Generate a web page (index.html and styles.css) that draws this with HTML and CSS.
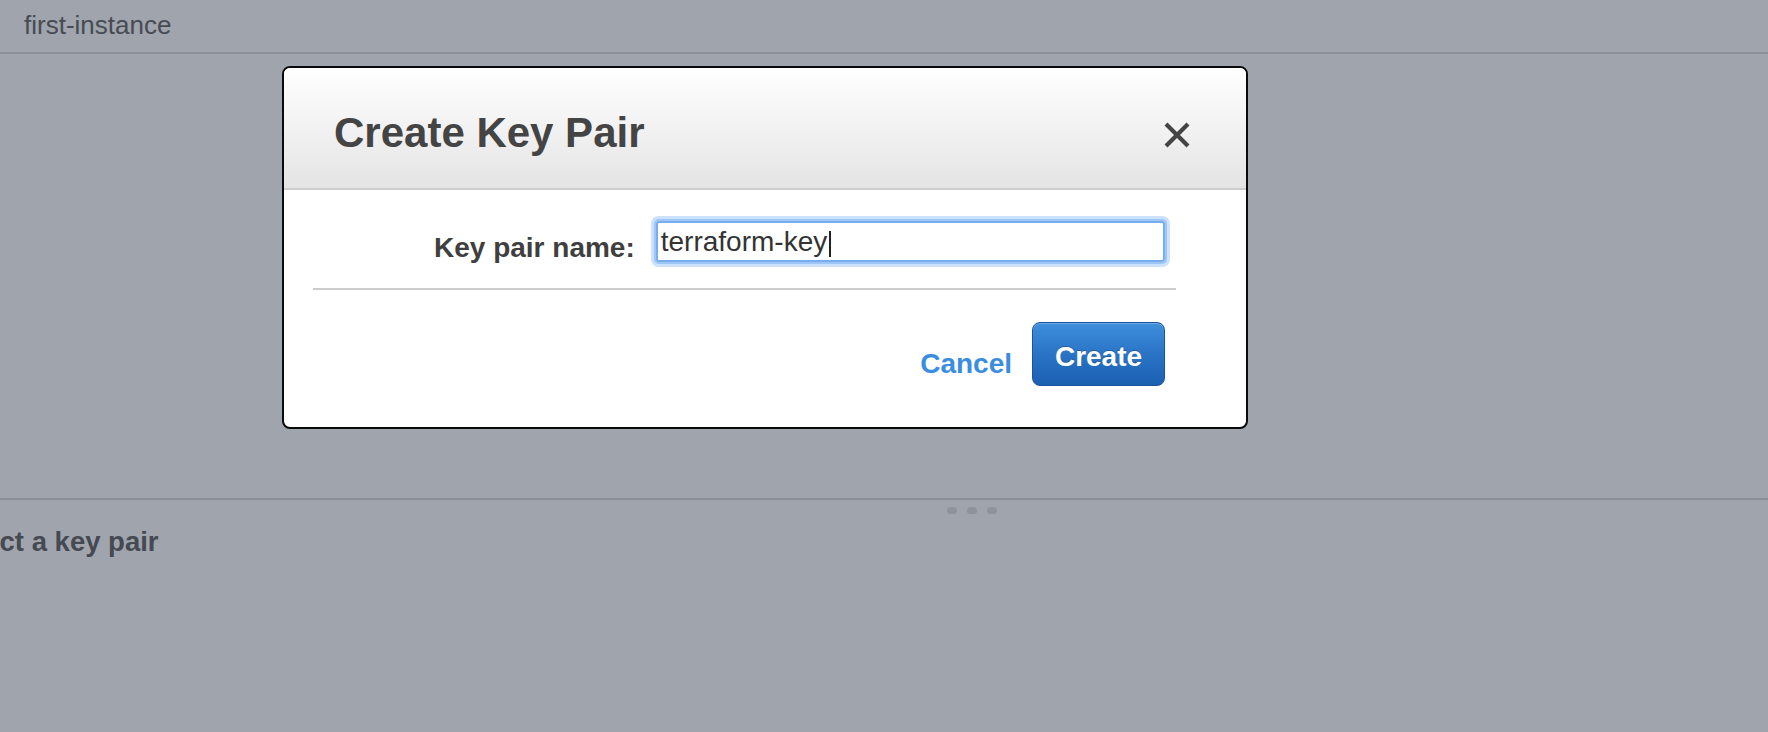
FILE: index.html
```html
<!DOCTYPE html>
<html>
<head>
<meta charset="utf-8">
<link rel="stylesheet" href="styles.css">
</head>
<body>
<div class="page">
  <div class="topbar">first-instance</div>
  <div class="upper"></div>
  <div class="handle"><span class="dot"></span><span class="dot"></span><span class="dot"></span></div>
  <div class="lower">
    <h2 class="section-title">Select a key pair</h2>
  </div>

  <div class="modal">
    <div class="modal-header">
      <h1 class="modal-title">Create Key Pair</h1>
      <svg class="close" width="28" height="26" viewBox="0 0 28 26">
        <path d="M3 2 L25 24 M25 2 L3 24" stroke="#444" stroke-width="4.2" stroke-linecap="butt" fill="none"/>
      </svg>
    </div>
    <div class="modal-body">
      <div class="field-row">
        <label class="field-label">Key pair name:</label>
        <div class="input">terraform-key<span class="caret"></span></div>
      </div>
      <div class="sep"></div>
      <div class="actions">
        <a class="cancel">Cancel</a>
        <button class="btn-primary">Create</button>
      </div>
    </div>
  </div>
</div>
</body>
</html>
```

FILE: styles.css
```css
* { box-sizing: border-box; }
html, body {
  margin: 0;
  padding: 0;
  background: #a0a4ac;
  font-family: "Liberation Sans", Arial, Helvetica, sans-serif;
  overflow: hidden;
}
.page {
  position: relative;
  width: 1768px;
  height: 732px;
}
.topbar {
  height: 54px;
  border-bottom: 2px solid #8c9098;
  padding-left: 24px;
  font-size: 26px;
  line-height: 30px;
  padding-top: 10px;
  color: #474b54;
}
.upper {
  height: 446px;
  border-bottom: 2px solid #8b8f97;
}
.handle {
  display: flex;
  gap: 10px;
  padding-left: 947px;
  margin-top: 7px;
}
.dot {
  width: 10px;
  height: 7px;
  background: #8e929a;
  border-radius: 4px 4px 3px 3px;
}
.lower {
  padding-top: 12px;
}
.section-title {
  margin: 0 0 0 -57px;
  font-size: 27.5px;
  line-height: 32px;
  font-weight: bold;
  color: #454952;
}
.modal {
  position: absolute;
  left: 282px;
  top: 66px;
  width: 966px;
  background: #fff;
  border: 2px solid #0a0a0a;
  border-radius: 8px;
  overflow: hidden;
}
.modal-header {
  height: 122px;
  display: flex;
  align-items: center;
  justify-content: space-between;
  padding: 0 55px 0 50px;
  background: linear-gradient(#ffffff 0%, #f6f6f6 35%, #e4e4e4 100%);
  border-bottom: 2px solid #cdcdcd;
}
.modal-title {
  margin: 10px 0 0 0;
  font-size: 42px;
  line-height: 48px;
  font-weight: bold;
  color: #444;
}
.close {
  display: block;
  margin-top: 14px;
}
.modal-body {
  padding: 31px 0 41px 0;
}
.field-row {
  display: flex;
  align-items: flex-start;
  padding-left: 150px;
  gap: 21px;
}
.field-label {
  margin-top: 11px;
  font-size: 28px;
  line-height: 32px;
  font-weight: bold;
  color: #3f3f3f;
}
.input {
  position: relative;
  width: 509px;
  height: 41px;
  border: 2px solid #78adf0;
  border-radius: 3px;
  box-shadow: 0 0 0 2px #9ec6f7, 0 0 0 5px #cce1fb;
  padding-left: 3px;
  font-size: 28px;
  line-height: 35px;
  color: #333;
  display: flex;
  align-items: center;
}
.caret {
  display: inline-block;
  width: 2px;
  height: 26px;
  background: #222;
  margin-left: 2px;
  margin-top: 4px;
}
.sep {
  height: 2px;
  background: #cccccc;
  margin: 24px 70px 0 29px;
}
.actions {
  display: flex;
  justify-content: flex-end;
  align-items: flex-start;
  gap: 20px;
  padding-right: 81px;
  margin-top: 32px;
}
.cancel {
  margin-top: 26px;
  font-size: 28px;
  line-height: 32px;
  font-weight: bold;
  color: #3a8ddf;
  cursor: pointer;
}
.btn-primary {
  width: 133px;
  height: 64px;
  border: 1px solid #1a559c;
  border-radius: 8px;
  background: linear-gradient(#3f8fdc 0%, #2a74c6 50%, #1b5fb1 100%);
  box-shadow: inset 0 1px 0 rgba(255,255,255,0.25);
  color: #fff;
  font-family: "Liberation Sans", Arial, Helvetica, sans-serif;
  font-size: 28px;
  font-weight: bold;
  line-height: 32px;
  padding: 5px 0 0 0;
  text-shadow: 0 -1px 0 rgba(0,0,0,0.25);
}
```
